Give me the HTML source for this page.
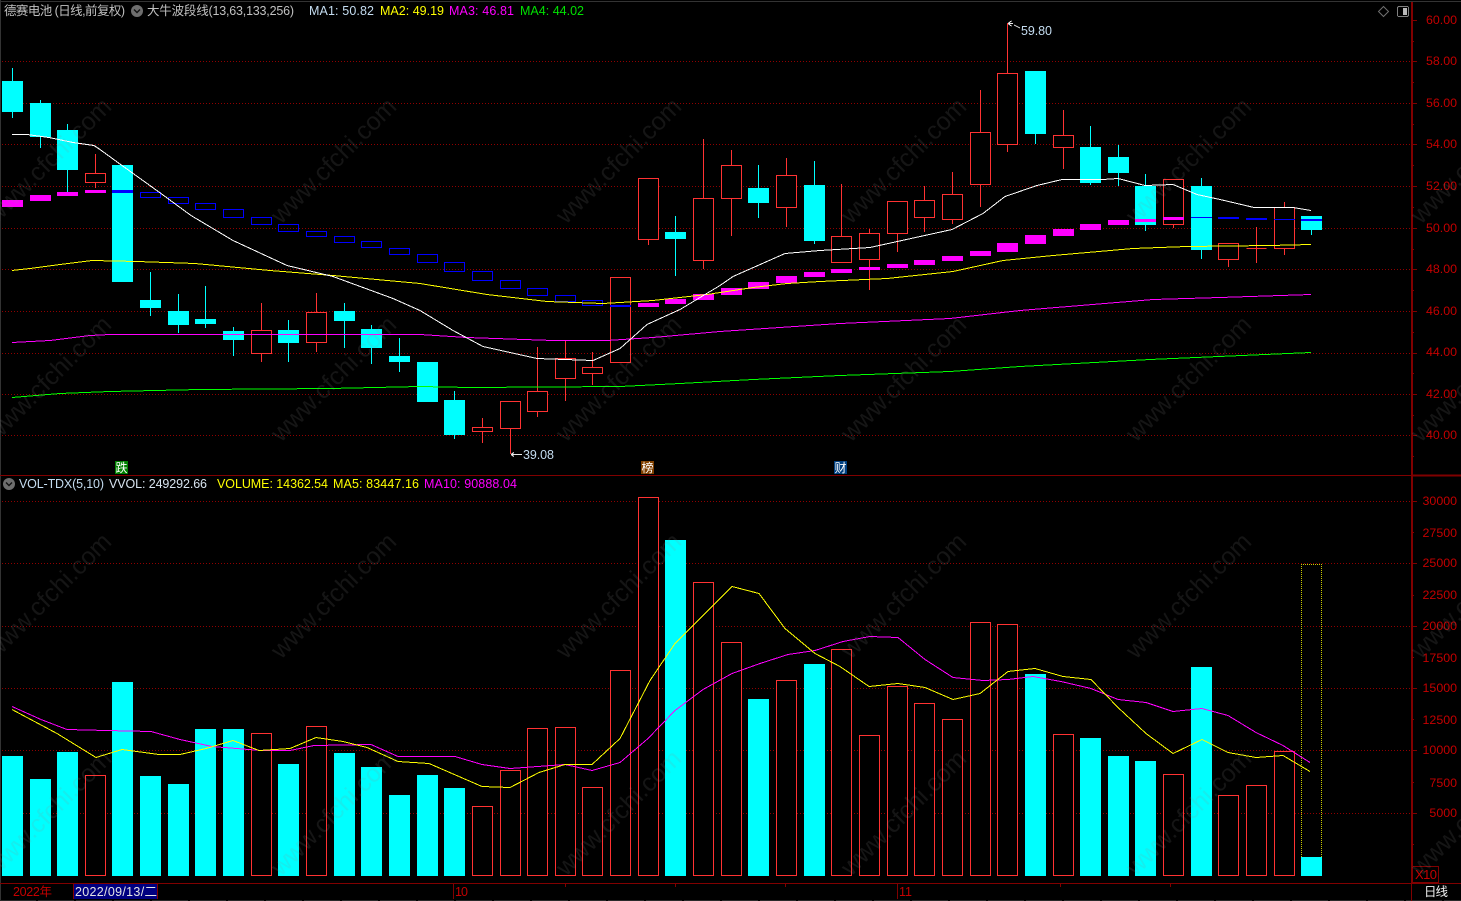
<!DOCTYPE html>
<html lang="zh-CN">
<head>
<meta charset="utf-8">
<title>德赛电池 日线</title>
<style>
html,body{margin:0;padding:0;background:#000;width:1461px;height:901px;overflow:hidden}
svg{display:block;font-family:"Liberation Sans","Noto Sans CJK SC",sans-serif}
.c{shape-rendering:crispEdges}
text{font-size:12.5px}
.ax text{fill:#c40000;font-size:12.4px;text-anchor:end}
.wm text{font-size:25px;fill:#8a8a8a;fill-opacity:.15}
</style>
</head>
<body>
<svg width="1461" height="901" viewBox="0 0 1461 901" xmlns="http://www.w3.org/2000/svg">
<rect width="1461" height="901" fill="#000"/>

<!-- frame -->
<g class="c" fill="none">
<path d="M0 1.5H1461M0.5 0V901" stroke="#333"/>
<path d="M0 475.5H1411M0 883.5H1461" stroke="#800000"/>
<path d="M1411 475.5H1461" stroke="#800000" stroke-width="2"/>
<path d="M1412 2V883" stroke="#800000" stroke-width="2"/>
<path d="M0 900.5H1461" stroke="#2a2a2a" stroke-dasharray="36 2"/>
</g>

<!-- grid -->
<g class="c" fill="none" stroke="#900000" stroke-dasharray="1 2">
<path d="M2 61.5H1410M2 103.5H1410M2 144.5H1410M2 186.5H1410M2 228.5H1410M2 269.5H1410M2 311.5H1410M2 353.5H1410M2 394.5H1410M2 435.5H1410"/>
<path d="M2 501.5H1410M2 563.5H1410M2 626.5H1410M2 688.5H1410M2 750.5H1410M2 813.5H1410"/>
</g>

<!-- axis ticks -->
<g class="c" fill="none" stroke="#800000">
<path d="M1412 20.5h5M1412 61.5h5M1412 103.5h5M1412 144.5h5M1412 186.5h5M1412 228.5h5M1412 269.5h5M1412 311.5h5M1412 353.5h5M1412 394.5h5M1412 435.5h5"/>
<path d="M1412 41.5h2M1412 82.5h2M1412 124.5h2M1412 165.5h2M1412 207.5h2M1412 249.5h2M1412 290.5h2M1412 332.5h2M1412 373.5h2M1412 415.5h2M1412 456.5h2"/>
<path d="M1412 501.5h5M1412 563.5h5M1412 626.5h5M1412 688.5h5M1412 750.5h5M1412 813.5h5"/>
<path d="M1412 532.5h2M1412 595.5h2M1412 657.5h2M1412 719.5h2M1412 782.5h2M1412 844.5h2"/>
<rect x="1412.5" y="866.5" width="26" height="16"/>
</g>
<g class="ax">
<text x="1457" y="24">60.00</text>
<text x="1457" y="65">58.00</text>
<text x="1457" y="107">56.00</text>
<text x="1457" y="148">54.00</text>
<text x="1457" y="190">52.00</text>
<text x="1457" y="232">50.00</text>
<text x="1457" y="273">48.00</text>
<text x="1457" y="315">46.00</text>
<text x="1457" y="356">44.00</text>
<text x="1457" y="398">42.00</text>
<text x="1457" y="439">40.00</text>
<text x="1457" y="505">30000</text>
<text x="1457" y="537">27500</text>
<text x="1457" y="567">25000</text>
<text x="1457" y="599">22500</text>
<text x="1457" y="630">20000</text>
<text x="1457" y="662">17500</text>
<text x="1457" y="692">15000</text>
<text x="1457" y="724">12500</text>
<text x="1457" y="754">10000</text>
<text x="1457" y="787">7500</text>
<text x="1457" y="817">5000</text>
</g>
<text x="1415" y="879" fill="#c40000" style="font-size:13px" textLength="22">X10</text>

<!-- candles -->
<g class="c">
<path fill="none" stroke="#00ffff" d="M12.5 68v50M40.5 100v48M67.5 124v68M150.5 272v44M178.5 294v39M205.5 286v42M233.5 327v29M288.5 320v42M344.5 303v45M371.5 325v39M399.5 338v34M454.5 391v48M675.5 216v60M758.5 165v53M814.5 161v83M1035.5 71v73M1090.5 126v59M1118.5 145v41M1145.5 174v57M1201.5 178v81M1311.5 216v19"/>
<path fill="#00ffff" d="M2 81h21v31h-21zM30 103h21v34h-21zM57 130h21v40h-21zM112 165h21v117h-21zM140 300h21v8h-21zM168 311h21v14h-21zM195 319h21v5h-21zM223 331h21v9h-21zM278 330h21v13h-21zM334 311h21v10h-21zM361 329h21v19h-21zM389 356h21v6h-21zM417 362h21v40h-21zM444 400h21v35h-21zM665 232h21v7h-21zM748 188h21v15h-21zM804 185h21v56h-21zM1025 71h21v63h-21zM1080 147h21v36h-21zM1108 157h21v16h-21zM1135 186h21v39h-21zM1191 186h21v64h-21zM1301 216h21v14h-21z"/>
<path fill="none" stroke="#ff3232" d="M95.5 154v34M261.5 303v59M316.5 293v59M482.5 418v25M510.5 401v53M537.5 347v70M565.5 340v61M592.5 352v33M648.5 178v67M703.5 139v130M731.5 150v86M786.5 158v69M841.5 184v79M869.5 229v61M897.5 201v51M924.5 186v46M952.5 172v52M980.5 90v117M1007.5 23v129M1063.5 110v59M1173.5 179v49M1228.5 243v24M1256.5 227v36M1284.5 202v53"/>
<path fill="#000" stroke="#ff3232" d="M85.5 173.5h20v9h-20zM251.5 330.5h20v23h-20zM306.5 312.5h20v30h-20zM472.5 427.5h20v4h-20zM500.5 401.5h20v27h-20zM527.5 391.5h20v20h-20zM555.5 358.5h20v20h-20zM582.5 367.5h20v6h-20zM610.5 277.5h20v85h-20zM638.5 178.5h20v61h-20zM693.5 198.5h20v62h-20zM721.5 165.5h20v33h-20zM776.5 175.5h20v32h-20zM831.5 236.5h20v26h-20zM859.5 233.5h20v26h-20zM887.5 201.5h20v32h-20zM914.5 200.5h20v17h-20zM942.5 194.5h20v25h-20zM970.5 132.5h20v52h-20zM997.5 73.5h20v71h-20zM1053.5 135.5h20v12h-20zM1163.5 179.5h20v45h-20zM1218.5 243.5h20v16h-20zM1246.5 248.5h20M1274.5 207.5h20v41h-20z"/>
</g>

<!-- wave band -->
<g class="c">
<path fill="none" stroke="#0000ff" d="M140.5 192.5h20v5h-20zM168.5 197.5h20v6h-20zM195.5 203.5h20v6h-20zM223.5 209.5h20v8h-20zM251.5 217.5h20v7h-20zM278.5 224.5h20v7h-20zM306.5 231.5h20v5h-20zM334.5 236.5h20v6h-20zM361.5 241.5h20v6h-20zM389.5 248.5h20v6h-20zM417.5 254.5h20v8h-20zM444.5 262.5h20v9h-20zM472.5 271.5h20v9h-20zM500.5 280.5h20v8h-20zM527.5 288.5h20v7h-20zM555.5 295.5h20v6h-20zM582.5 300.5h20v5h-20z"/>
<path fill="#0000ff" d="M112 190h21v3h-21zM610 305h21v2h-21zM1191 217h21v1h-21zM1218 217h21v2h-21zM1246 218h21v2h-21zM1274 219h21v1h-21zM1301 219h21v2h-21z"/>
<path fill="#ff00ff" d="M2 200h21v7h-21zM30 195h21v6h-21zM57 192h21v4h-21zM85 190h21v3h-21zM638 303h21v4h-21zM665 299h21v5h-21zM693 294h21v6h-21zM721 288h21v7h-21zM748 282h21v7h-21zM776 276h21v7h-21zM804 272h21v5h-21zM831 269h21v4h-21zM859 267h21v3h-21zM887 264h21v4h-21zM914 260h21v5h-21zM942 256h21v5h-21zM970 251h21v5h-21zM997 243h21v9h-21zM1025 235h21v9h-21zM1053 229h21v7h-21zM1080 224h21v6h-21zM1108 220h21v5h-21zM1135 219h21v3h-21zM1163 217h21v3h-21z"/>
</g>

<!-- price MAs -->
<g class="c" fill="none">
<polyline stroke="#00ff00" points="12,397.5 60,393.5 110,391.5 200,389.5 330,388.5 420,386.5 470,387.5 620,386.5 640,385.5 680,383.5 753,379.5 840,375.5 950,371.5 1020,366.5 1150,359.5 1311,352.5"/>
<polyline stroke="#ff00ff" points="12,342.5 50,340.5 90,335.5 110,334.5 200,334.5 420,334.5 467,337.5 553,340.5 607,340.5 653,337.5 720,331.5 840,323.5 950,318.5 1020,310.5 1153,299.5 1220,297.5 1311,294.5"/>
<polyline stroke="#ffff00" points="12,270.5 30,268.5 60,264.5 92,260.5 137,261.5 195,263.5 270,270.5 333,275.5 420,283.5 487,294.5 547,301.5 603,303.5 653,300.5 707,294.5 753,287.5 787,283.5 820,281.5 887,278.5 953,271.5 1003,260.5 1053,255.5 1133,248.5 1187,246.5 1270,245.5 1311,244.5"/>
<polyline stroke="#ffffff" points="12,134.5 27,134.5 49,137.5 73,142.5 94,145.5 100,149.5 122,165.5 161,193.5 191,215.5 233,240.5 287,265.5 333,276.5 393,298.5 420,310.5 453,330.5 483,346.5 537,358.5 593,360.5 620,348.5 647,324.5 680,309.5 720,285.5 733,276.5 785,253.5 820,250.5 870,247.5 952,229.5 983,213.5 1005,196.5 1037,185.5 1062,179.5 1103,179.5 1118,178.5 1145,185.5 1173,184.5 1197,194.5 1220,199.5 1254,207.5 1293,207.5 1311,210.5"/>
</g>

<!-- high / low markers -->
<g fill="none" stroke="#e8e8e8">
<path class="c" d="M1008 23.5h5M1008.5 23l3-2M1008.5 24l3 2M1014 25l6 3"/>
<path class="c" d="M511 454.5h11M511 454.5l3-2M511 454.5l3 2"/>
</g>
<text x="1021" y="35" fill="#c4dcf0" textLength="31">59.80</text>
<text x="523" y="459" fill="#c4dcf0" textLength="31">39.08</text>

<!-- event badges -->
<g class="c">
<rect x="115" y="461" width="13" height="13" fill="#008000"/>
<rect x="641" y="461" width="13" height="13" fill="#804000"/>
<rect x="834" y="461" width="13" height="13" fill="#004080"/>
</g>
<g fill="#fff" text-anchor="middle">
<text x="121.5" y="472" style="font-size:12px">跌</text>
<text x="647.5" y="472" style="font-size:12px">榜</text>
<text x="840.5" y="472" style="font-size:12px">财</text>
</g>

<!-- volume bars -->
<g class="c">
<path fill="#00ffff" d="M2 756h21V876h-21zM30 779h21V876h-21zM57 752h21V876h-21zM112 682h21V876h-21zM140 776h21V876h-21zM168 784h21V876h-21zM195 729h21V876h-21zM223 729h21V876h-21zM278 764h21V876h-21zM334 753h21V876h-21zM361 767h21V876h-21zM389 795h21V876h-21zM417 775h21V876h-21zM444 788h21V876h-21zM665 540h21V876h-21zM748 699h21V876h-21zM804 664h21V876h-21zM1025 674h21V876h-21zM1080 738h21V876h-21zM1108 756h21V876h-21zM1135 761h21V876h-21zM1191 667h21V876h-21zM1301 857h21V876h-21z"/>
<path fill="#000" stroke="#ff3232" d="M85.5 775.5h20V875.5h-20zM251.5 733.5h20V875.5h-20zM306.5 726.5h20V875.5h-20zM472.5 806.5h20V875.5h-20zM500.5 770.5h20V875.5h-20zM527.5 728.5h20V875.5h-20zM555.5 727.5h20V875.5h-20zM582.5 787.5h20V875.5h-20zM610.5 670.5h20V875.5h-20zM638.5 497.5h20V875.5h-20zM693.5 582.5h20V875.5h-20zM721.5 642.5h20V875.5h-20zM776.5 680.5h20V875.5h-20zM831.5 649.5h20V875.5h-20zM859.5 735.5h20V875.5h-20zM887.5 686.5h20V875.5h-20zM914.5 703.5h20V875.5h-20zM942.5 719.5h20V875.5h-20zM970.5 622.5h20V875.5h-20zM997.5 624.5h20V875.5h-20zM1053.5 734.5h20V875.5h-20zM1163.5 774.5h20V875.5h-20zM1218.5 795.5h20V875.5h-20zM1246.5 785.5h20V875.5h-20zM1274.5 751.5h20V875.5h-20z"/>
<path fill="none" stroke="#c8c800" stroke-dasharray="1 1" d="M1301.5 857V564.5H1321.5V857"/>
</g>

<!-- volume MAs -->
<g class="c" fill="none">
<polyline stroke="#ff00ff" points="12,706.5 41,719.5 67,729.5 106,730.5 151,731.5 180,739.5 212,746.5 261,750.5 290,750.5 314,745.5 371,744.5 398,756.5 455,756.5 482,764.5 510,768.5 565,764.5 592,770.5 620,762.5 648,738.5 675,710.5 703,689.5 732,673.5 760,663.5 788,654.5 815,650.5 843,641.5 870,636.5 898,637.5 925,659.5 953,677.5 983,680.5 1008,679.5 1033,676.5 1061,681.5 1091,688.5 1118,699.5 1146,702.5 1173,711.5 1202,708.5 1228,715.5 1256,732.5 1283,745.5 1310,762.5"/>
<polyline stroke="#ffff00" points="12,709.5 57,733.5 96,757.5 122,749.5 159,754.5 180,754.5 206,748.5 233,740.5 259,750.5 290,748.5 316,737.5 343,741.5 367,747.5 398,761.5 429,763.5 482,786.5 510,787.5 539,772.5 565,764.5 592,764.5 620,738.5 650,680.5 675,643.5 732,586.5 759,593.5 785,628.5 815,653.5 840,666.5 869,686.5 898,683.5 925,687.5 953,699.5 980,693.5 1008,671.5 1035,668.5 1063,676.5 1091,679.5 1118,707.5 1146,733.5 1173,753.5 1202,739.5 1228,752.5 1256,757.5 1283,755.5 1310,771.5"/>
</g>

<!-- header top -->
<text x="4" y="15" fill="#c0c0c0" textLength="121">德赛电池 (日线,前复权)</text>
<circle cx="137" cy="11" r="6" fill="#6e6e6e"/>
<path d="M134 9.5l3 3 3-3" fill="none" stroke="#111" stroke-width="1.4"/>
<text x="147" y="15" fill="#c0c0c0" textLength="147">大牛波段线(13,63,133,256)</text>
<text x="309" y="15" fill="#c4dcf0" textLength="65">MA1: 50.82</text>
<text x="380" y="15" fill="#ffff00" textLength="64">MA2: 49.19</text>
<text x="449" y="15" fill="#ff00ff" textLength="65">MA3: 46.81</text>
<text x="520" y="15" fill="#00e000" textLength="64">MA4: 44.02</text>

<path d="M1383.5 6.5l5 5-5 5-5-5z" fill="none" stroke="#707070"/>
<rect class="c" x="1397.5" y="6.5" width="11" height="10" rx="1.5" fill="#000" stroke="#808080"/>
<rect class="c" x="1403" y="8" width="4" height="7" fill="#b8b8b8"/>

<!-- header volume -->
<circle cx="9" cy="484" r="6" fill="#6e6e6e"/>
<path d="M6 482.5l3 3 3-3" fill="none" stroke="#111" stroke-width="1.4"/>
<text x="19" y="488" fill="#c4dcf0" textLength="85">VOL-TDX(5,10)</text>
<text x="109" y="488" fill="#d8e4f0" textLength="98">VVOL: 249292.66</text>
<text x="217" y="488" fill="#ffff00" textLength="111">VOLUME: 14362.54</text>
<text x="333" y="488" fill="#ffff00" textLength="86">MA5: 83447.16</text>
<text x="424" y="488" fill="#ff00ff" textLength="93">MA10: 90888.04</text>

<!-- bottom axis -->
<g class="c">
<rect x="73" y="884" width="85" height="15" fill="#000080"/>
<path fill="none" stroke="#800000" d="M73.5 884v15M157.5 884v15M453.5 884v15M897.5 884v15M565.5 884v3M675.5 884v3M785.5 884v3M1060.5 884v3M1170.5 884v3"/>
<path fill="none" stroke="#800000" d="M1411.5 884v17"/>
</g>
<text x="13" y="896" fill="#c40000" textLength="39">2022年</text>
<text x="75" y="896" fill="#e4e4e4" textLength="82">2022/09/13/二</text>
<text x="455" y="896" fill="#c40000" textLength="13">10</text>
<text x="899" y="896" fill="#c40000" textLength="13">11</text>
<text x="1424" y="896" fill="#f0f0f0" textLength="24">日线</text>

<!-- watermark -->
<g class="wm">
<text transform="translate(-4 225) rotate(-45)">www.cfchi.com</text>
<text transform="translate(281 225) rotate(-45)">www.cfchi.com</text>
<text transform="translate(566 225) rotate(-45)">www.cfchi.com</text>
<text transform="translate(851 225) rotate(-45)">www.cfchi.com</text>
<text transform="translate(1136 225) rotate(-45)">www.cfchi.com</text>
<text transform="translate(1421 225) rotate(-45)">www.cfchi.com</text>
<text transform="translate(-4 443) rotate(-45)">www.cfchi.com</text>
<text transform="translate(281 443) rotate(-45)">www.cfchi.com</text>
<text transform="translate(566 443) rotate(-45)">www.cfchi.com</text>
<text transform="translate(851 443) rotate(-45)">www.cfchi.com</text>
<text transform="translate(1136 443) rotate(-45)">www.cfchi.com</text>
<text transform="translate(1421 443) rotate(-45)">www.cfchi.com</text>
<text transform="translate(-4 660) rotate(-45)">www.cfchi.com</text>
<text transform="translate(281 660) rotate(-45)">www.cfchi.com</text>
<text transform="translate(566 660) rotate(-45)">www.cfchi.com</text>
<text transform="translate(851 660) rotate(-45)">www.cfchi.com</text>
<text transform="translate(1136 660) rotate(-45)">www.cfchi.com</text>
<text transform="translate(1421 660) rotate(-45)">www.cfchi.com</text>
<text transform="translate(-4 877) rotate(-45)">www.cfchi.com</text>
<text transform="translate(281 877) rotate(-45)">www.cfchi.com</text>
<text transform="translate(566 877) rotate(-45)">www.cfchi.com</text>
<text transform="translate(851 877) rotate(-45)">www.cfchi.com</text>
<text transform="translate(1136 877) rotate(-45)">www.cfchi.com</text>
<text transform="translate(1421 877) rotate(-45)">www.cfchi.com</text>
</g>
</svg>
</body>
</html>
